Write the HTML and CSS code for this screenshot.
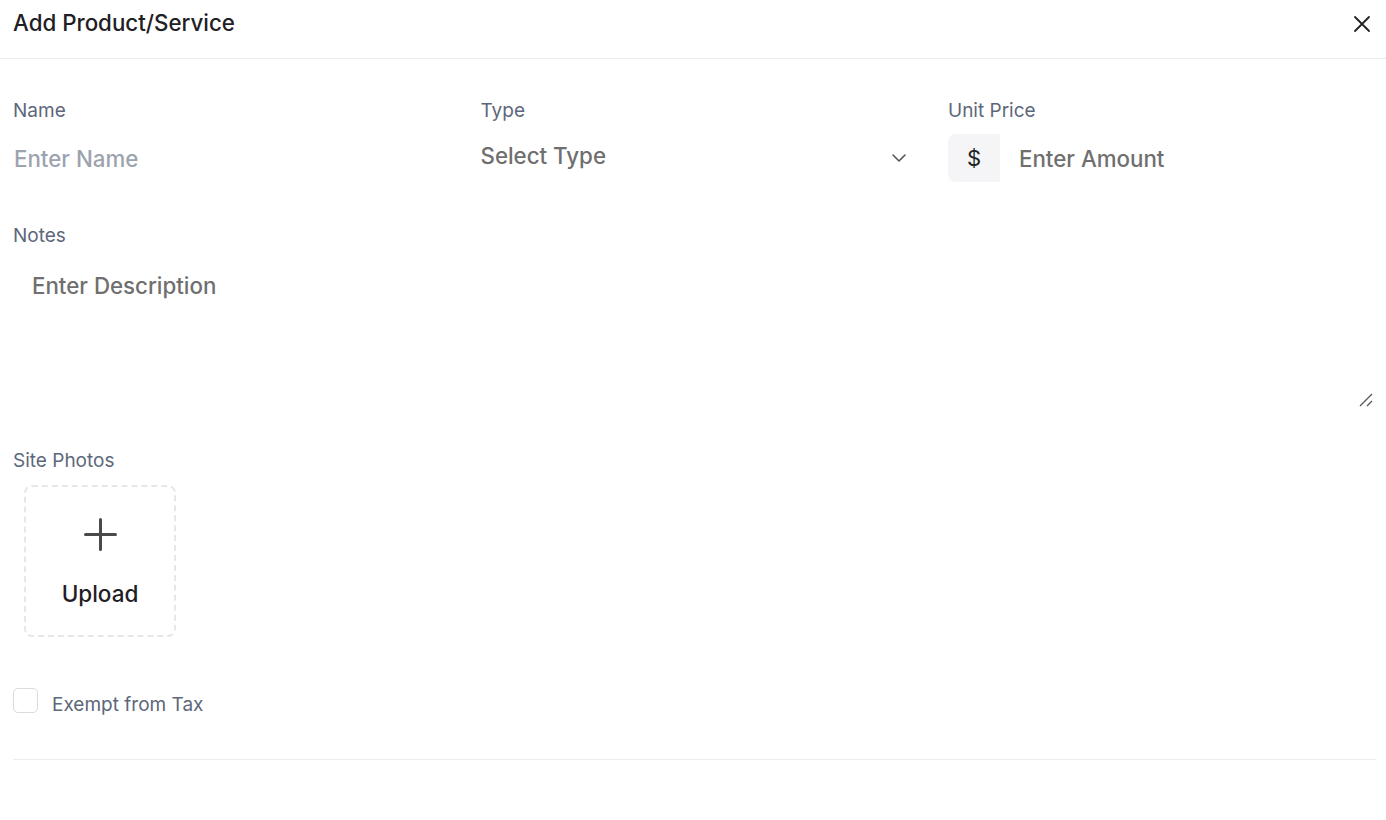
FILE: index.html
```html
<!DOCTYPE html>
<html>
<head>
<meta charset="utf-8">
<link rel="stylesheet" href="styles.css">
</head>
<body>
<div class="modal">
  <header class="modal-header">
    <h1 class="title">Add Product/Service</h1>
    <button class="close" aria-label="Close">
      <svg width="18" height="18" viewBox="0 0 18 18"><path d="M2 2 L16 16 M16 2 L2 16" stroke="#222" stroke-width="1.8" stroke-linecap="round" fill="none"/></svg>
    </button>
  </header>
  <div class="modal-body">
    <div class="row3">
      <div class="field">
        <label class="label">Name</label>
        <div class="input-plain"><span class="ph-light">Enter Name</span></div>
      </div>
      <div class="field">
        <label class="label">Type</label>
        <div class="select">
          <span class="ph">Select Type</span>
          <svg class="chev" width="18" height="18" viewBox="0 0 18 18"><path d="M3 6 L9 12 L15 6" stroke="#555" stroke-width="1.6" fill="none" stroke-linecap="round" stroke-linejoin="round"/></svg>
        </div>
      </div>
      <div class="field">
        <label class="label">Unit Price</label>
        <div class="price">
          <span class="addon">$</span>
          <span class="ph amount">Enter Amount</span>
        </div>
      </div>
    </div>
    <div class="field notes">
      <label class="label">Notes</label>
      <div class="textarea">
        <span class="ph">Enter Description</span>
        <svg class="grip" width="16" height="16" viewBox="0 0 16 16"><path d="M2 14 L14 2 M9 14 L14 9" stroke="#555" stroke-width="1.3" fill="none"/></svg>
      </div>
    </div>
    <div class="field photos">
      <label class="label">Site Photos</label>
      <div class="upload">
        <svg width="33" height="33" viewBox="0 0 33 33"><path d="M16.5 1.5 V31.5 M1.5 16.5 H31.5" stroke="#4a4a4a" stroke-width="3" stroke-linecap="round"/></svg>
        <span class="upload-text">Upload</span>
      </div>
    </div>
    <div class="check-row">
      <span class="checkbox"></span>
      <span class="check-label">Exempt from Tax</span>
    </div>
    <div class="footer-line"></div>
  </div>
</div>
</body>
</html>
```

FILE: styles.css
```css
* { box-sizing: border-box; }
html, body { margin: 0; padding: 0; background: #fff; }
body { font-family: Inter, "Noto Sans", "Liberation Sans", sans-serif; color: #1f2024; }
.modal { width: 1386px; }
.modal-header {
  height: 59px;
  border-bottom: 1px solid #ececec;
  display: flex;
  align-items: center;
  justify-content: space-between;
  padding: 0 15px 12px 13px;
}
.title { margin: 0; font-size: 22.3px; font-weight: 550; color: #1f2024; line-height: 28px; }
.close { background: none; border: 0; padding: 0; display: flex; margin-top: 2px; }
.modal-body { padding: 38px 10px 0 13px; }
.row3 { display: grid; grid-template-columns: 428px 428px 428px; column-gap: 39.5px; }
.field { display: flex; flex-direction: column; }
.label { font-size: 19px; color: #5d677a; line-height: 27px; }
.input-plain { height: 48px; margin-top: 10px; display: flex; align-items: center; padding-left: 1px; }
.ph-light { font-size: 22.3px; color: #9ca3af; font-weight: 500; line-height: 27px; }
.ph { font-size: 22.3px; color: #6f6f6f; font-weight: 500; line-height: 27px; }
.select { height: 48px; margin-top: 10px; display: flex; align-items: center; justify-content: space-between; padding-bottom: 5px; }
.chev { margin-right: 1px; margin-top: 4px; }
.price { height: 48px; margin-top: 10px; display: flex; align-items: center; }
.addon { width: 52px; height: 48px; background: #f5f5f7; border-radius: 8px 0 0 8px; display: flex; align-items: center; justify-content: center; font-size: 22px; color: #222; }
.amount { margin-left: 19px; }
.notes { margin-top: 40px; }
.textarea { position: relative; height: 151px; width: 1363px; margin-top: 10px; padding: 13px 19px; }
.grip { position: absolute; right: 2px; bottom: 2px; }
.photos { margin-top: 37px; }
.upload {
  margin: 11px 0 0 11px;
  width: 152px; height: 152px;
  border: 2px dashed #e6e7ea;
  border-radius: 8px;
  display: flex; flex-direction: column; align-items: center; justify-content: center;
  gap: 29px;
  padding-top: 2px;
}
.upload-text { font-size: 22.5px; font-weight: 500; color: #1f2024; line-height: 27px; }
.check-row { display: flex; align-items: flex-start; margin-top: 51px; gap: 14px; }
.checkbox { width: 25px; height: 25px; border: 1px solid #d9dbe0; border-radius: 5px; flex: none; }
.check-label { font-size: 19px; color: #5d677a; line-height: 27px; margin-top: 3px; }
.footer-line { margin-top: 41px; border-top: 1px solid #ececec; width: 1363px; }
```
